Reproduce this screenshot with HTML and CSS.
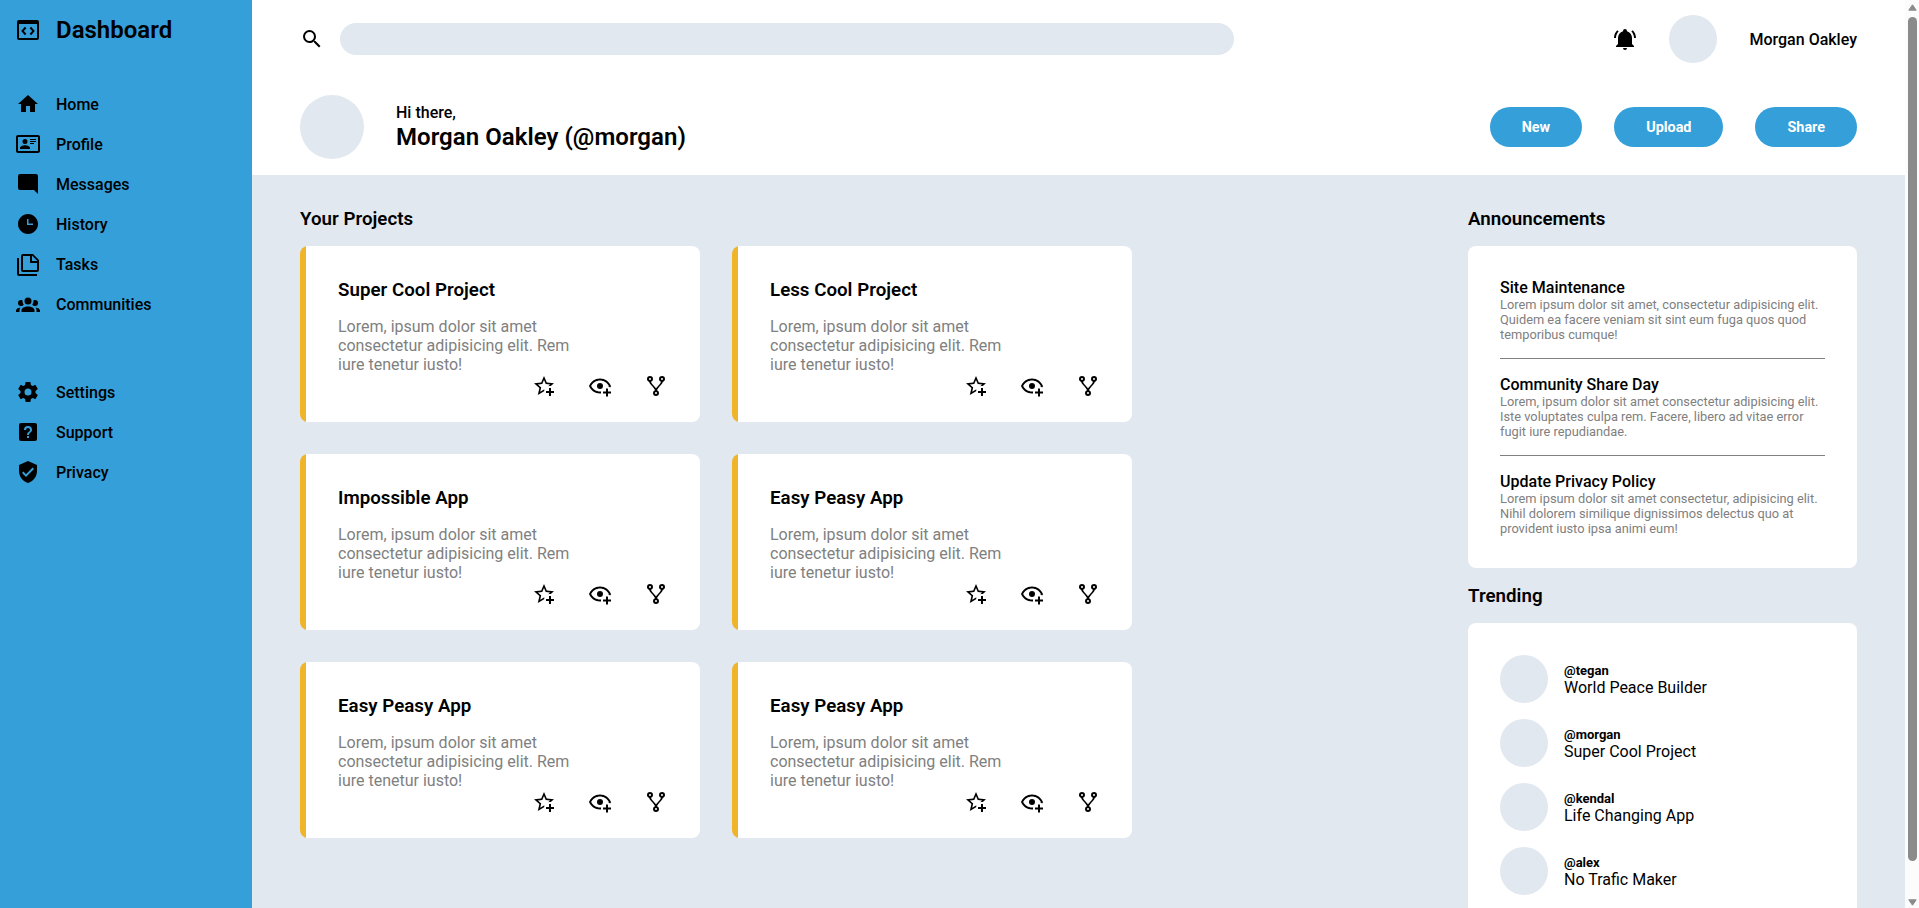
FILE: index.html
```html
<!DOCTYPE html>
<html lang="en">
<head>
<meta charset="utf-8">
<title>Dashboard</title>
<link rel="stylesheet" href="styles.css">
</head>
<body>
<svg class="sprite" aria-hidden="true">
  <symbol id="star" viewBox="0 0 24 24"><path d="M5.8 21L7.4 14L2 9.2L9.2 8.6L12 2L14.8 8.6L22 9.2L18.8 12H18C17.3 12 16.6 12.1 15.9 12.4L18.1 10.5L13.7 10.1L12 6.1L10.3 10.1L5.9 10.5L9.2 13.4L8.2 17.7L12 15.4L12.5 15.7C12.3 16.2 12.1 16.8 12.1 17.3L5.8 21M17 14V17H14V19H17V22H19V19H22V17H19V14H17Z"/></symbol>
  <symbol id="eye" viewBox="0 0 24 24"><path d="M12,4.5C7,4.5 2.73,7.61 1,12C2.73,16.39 7,19.5 12,19.5C12.36,19.5 12.72,19.5 13.08,19.45C13.03,19.13 13,18.82 13,18.5C13,18.14 13.04,17.78 13.1,17.42C12.74,17.46 12.37,17.5 12,17.5C8.24,17.5 4.83,15.36 3.18,12C4.83,8.64 8.24,6.5 12,6.5C15.76,6.5 19.17,8.64 20.82,12C20.7,12.24 20.56,12.45 20.43,12.68C21.09,12.84 21.72,13.11 22.29,13.5C22.56,13 22.8,12.5 23,12C21.27,7.61 17,4.5 12,4.5M12,9A3,3 0 0,0 9,12A3,3 0 0,0 12,15A3,3 0 0,0 15,12A3,3 0 0,0 12,9M18,14.5V17.5H15V19.5H18V22.5H20V19.5H23V17.5H20V14.5H18Z"/></symbol>
  <symbol id="fork" viewBox="0 0 24 24"><path d="M6,2A3,3 0 0,1 9,5C9,6.28 8.19,7.38 7.06,7.81C7.15,8.27 7.39,8.83 8,9.63C9,10.92 11,12.83 12,14.17C13,12.83 15,10.92 16,9.63C16.61,8.83 16.85,8.27 16.94,7.81C15.81,7.38 15,6.28 15,5A3,3 0 0,1 18,2A3,3 0 0,1 21,5C21,6.32 20.14,7.45 18.95,7.85C18.87,8.37 18.64,9 18,9.83C17,11.17 15,13.08 14,14.38C13.39,15.17 13.15,15.73 13.06,16.19C14.19,16.62 15,17.72 15,19A3,3 0 0,1 12,22A3,3 0 0,1 9,19C9,17.72 9.81,16.62 10.94,16.19C10.85,15.73 10.61,15.17 10,14.38C9,13.08 7,11.17 6,9.83C5.36,9 5.13,8.37 5.05,7.85C3.86,7.45 3,6.32 3,5A3,3 0 0,1 6,2M6,4A1,1 0 0,0 5,5A1,1 0 0,0 6,6A1,1 0 0,0 7,5A1,1 0 0,0 6,4M18,4A1,1 0 0,0 17,5A1,1 0 0,0 18,6A1,1 0 0,0 19,5A1,1 0 0,0 18,4M12,18A1,1 0 0,0 11,19A1,1 0 0,0 12,20A1,1 0 0,0 13,19A1,1 0 0,0 12,18Z"/></symbol>
</svg>
<div class="page">
  <aside class="sidebar">
    <div class="brand">
      <svg class="icon" viewBox="0 0 24 24"><path d="M21,2H3A2,2 0 0,0 1,4V20A2,2 0 0,0 3,22H21A2,2 0 0,0 23,20V4A2,2 0 0,0 21,2M21,20H3V6H21V20M8.9,8.8L10.4,10.2L7.8,13L10.4,15.8L8.9,17.2L5.2,13L8.9,8.8M15.1,17.2L13.6,15.8L16.2,13L13.6,10.2L15.1,8.8L18.8,13L15.1,17.2Z"/></svg>
      <h1>Dashboard</h1>
    </div>
    <nav class="nav">
      <a><svg class="icon" viewBox="0 0 24 24"><path d="M10,20V14H14V20H19V12H22L12,3L2,12H5V20H10Z"/></svg>Home</a>
      <a><svg class="icon" viewBox="0 0 24 24"><path d="M22,3H2C0.91,3.04 0.04,3.91 0,5V19C0.04,20.09 0.91,20.96 2,21H22C23.09,20.96 23.96,20.09 24,19V5C23.96,3.91 23.09,3.04 22,3M22,19H2V5H22V19M14,17V15.75C14,14.09 10.66,13.25 9,13.25C7.34,13.25 4,14.09 4,15.75V17H14M9,7A2.5,2.5 0 0,0 6.5,9.5A2.5,2.5 0 0,0 9,12A2.5,2.5 0 0,0 11.5,9.5A2.5,2.5 0 0,0 9,7M14,7V8H20V7H14M14,9V10H20V9H14M14,11V12H18V11H14"/></svg>Profile</a>
      <a><svg class="icon" viewBox="0 0 24 24"><path d="M22,4C22,2.89 21.1,2 20,2H4A2,2 0 0,0 2,4V16A2,2 0 0,0 4,18H18L22,22V4Z"/></svg>Messages</a>
      <a><svg class="icon" viewBox="0 0 24 24"><path d="M12 2C6.5 2 2 6.5 2 12S6.5 22 12 22 22 17.5 22 12 17.5 2 12 2M17 13H11V7H12.5V11.5H17V13Z"/></svg>History</a>
      <a><svg class="icon" viewBox="0 0 24 24"><path d="M3,6V22H21V24H3A2,2 0 0,1 1,22V6H3M16,9H21.5L16,3.5V9M7,2H17L23,8V18A2,2 0 0,1 21,20H7C5.89,20 5,19.1 5,18V4A2,2 0 0,1 7,2M7,4V18H21V11H14V4H7Z"/></svg>Tasks</a>
      <a><svg class="icon" viewBox="0 0 24 24"><path d="M12,5.5A3.5,3.5 0 0,1 15.5,9A3.5,3.5 0 0,1 12,12.5A3.5,3.5 0 0,1 8.5,9A3.5,3.5 0 0,1 12,5.5M5,8C5.56,8 6.08,8.15 6.53,8.42C6.38,9.85 6.8,11.27 7.66,12.38C7.16,13.34 6.16,14 5,14A3,3 0 0,1 2,11A3,3 0 0,1 5,8M19,8A3,3 0 0,1 22,11A3,3 0 0,1 19,14C17.84,14 16.84,13.34 16.34,12.38C17.2,11.27 17.62,9.85 17.47,8.42C17.92,8.15 18.44,8 19,8M5.5,18.25C5.5,16.18 8.41,14.5 12,14.5C15.59,14.5 18.5,16.18 18.5,18.25V20H5.5V18.25M0,20V18.5C0,17.11 1.89,15.94 4.45,15.6C3.86,16.28 3.5,17.22 3.5,18.25V20H0M24,20H20.5V18.25C20.5,17.22 20.14,16.28 19.55,15.6C22.11,15.94 24,17.11 24,18.5V20Z"/></svg>Communities</a>
    </nav>
    <nav class="nav">
      <a><svg class="icon" viewBox="0 0 24 24"><path d="M12,15.5A3.5,3.5 0 0,1 8.5,12A3.5,3.5 0 0,1 12,8.5A3.5,3.5 0 0,1 15.5,12A3.5,3.5 0 0,1 12,15.5M19.43,12.97C19.47,12.65 19.5,12.33 19.5,12C19.5,11.67 19.47,11.34 19.43,11L21.54,9.37C21.73,9.22 21.78,8.95 21.66,8.73L19.66,5.27C19.54,5.05 19.27,4.96 19.05,5.05L16.56,6.05C16.04,5.66 15.5,5.32 14.87,5.07L14.5,2.42C14.46,2.18 14.25,2 14,2H10C9.75,2 9.54,2.18 9.5,2.42L9.13,5.07C8.5,5.32 7.96,5.66 7.44,6.05L4.95,5.05C4.73,4.96 4.46,5.05 4.34,5.27L2.34,8.73C2.21,8.95 2.27,9.22 2.46,9.37L4.57,11C4.53,11.34 4.5,11.67 4.5,12C4.5,12.33 4.53,12.65 4.57,12.97L2.46,14.63C2.27,14.78 2.21,15.05 2.34,15.27L4.34,18.73C4.46,18.95 4.73,19.03 4.95,18.95L7.44,17.94C7.96,18.34 8.5,18.68 9.13,18.93L9.5,21.58C9.54,21.82 9.75,22 10,22H14C14.25,22 14.46,21.82 14.5,21.58L14.87,18.93C15.5,18.67 16.04,18.34 16.56,17.94L19.05,18.95C19.27,19.03 19.54,18.95 19.66,18.73L21.66,15.27C21.78,15.05 21.73,14.78 21.54,14.63L19.43,12.97Z"/></svg>Settings</a>
      <a><svg class="icon" viewBox="0 0 24 24"><path fill-rule="evenodd" d="M11,18H13V16H11V18M12,6A4,4 0 0,0 8,10H10A2,2 0 0,1 12,8A2,2 0 0,1 14,10C14,12 11,11.75 11,15H13C13,12.75 16,12.5 16,10A4,4 0 0,0 12,6M5,3H19A2,2 0 0,1 21,5V19A2,2 0 0,1 19,21H5A2,2 0 0,1 3,19V5A2,2 0 0,1 5,3Z"/></svg>Support</a>
      <a><svg class="icon" viewBox="0 0 24 24"><path d="M10,17L6,13L7.41,11.59L10,14.17L16.59,7.58L18,9M12,1L3,5V11C3,16.55 6.84,21.74 12,23C17.16,21.74 21,16.55 21,11V5L12,1Z"/></svg>Privacy</a>
    </nav>
  </aside>

  <div class="content">
    <header class="header">
      <div class="topbar">
        <svg class="icon search-icon" viewBox="0 0 24 24"><path d="M9.5,3A6.5,6.5 0 0,1 16,9.5C16,11.11 15.41,12.59 14.44,13.73L14.71,14H15.5L20.5,19L19,20.5L14,15.5V14.71L13.73,14.44C12.59,15.41 11.11,16 9.5,16A6.5,6.5 0 0,1 3,9.5A6.5,6.5 0 0,1 9.5,3M9.5,5C7,5 5,7 5,9.5C5,12 7,14 9.5,14C12,14 14,12 14,9.5C14,7 12,5 9.5,5Z"/></svg>
        <div class="search"></div>
        <div class="user">
          <svg class="icon" viewBox="0 0 24 24"><path d="M21,19V20H3V19L5,17V11C5,7.9 7.03,5.17 10,4.29C10,4.19 10,4.1 10,4A2,2 0 0,1 12,2A2,2 0 0,1 14,4C14,4.1 14,4.19 14,4.29C16.97,5.17 19,7.9 19,11V17L21,19M14,21A2,2 0 0,1 12,23A2,2 0 0,1 10,21M19.75,3.19L18.33,4.61C20.04,6.3 21,8.6 21,11H23C23,8.07 21.84,5.25 19.75,3.19M1,11H3C3,8.6 3.96,6.3 5.67,4.61L4.25,3.19C2.16,5.25 1,8.07 1,11Z"/></svg>
          <div class="avatar"></div>
          <span class="user-name">Morgan Oakley</span>
        </div>
      </div>
      <div class="welcome">
        <div class="avatar avatar-large"></div>
        <div class="greeting">
          <p>Hi there,</p>
          <h2>Morgan Oakley (@morgan)</h2>
        </div>
        <div class="actions">
          <button>New</button>
          <button>Upload</button>
          <button>Share</button>
        </div>
      </div>
    </header>

    <main class="main">
      <section class="projects">
        <h3>Your Projects</h3>
        <div class="cards">
          <article class="card">
            <h3>Super Cool Project</h3>
            <p>Lorem, ipsum dolor sit amet consectetur adipisicing elit. Rem iure tenetur iusto!</p>
            <div class="card-icons"><svg class="icon"><use href="#star"/></svg><svg class="icon"><use href="#eye"/></svg><svg class="icon"><use href="#fork"/></svg></div>
          </article>
          <article class="card">
            <h3>Less Cool Project</h3>
            <p>Lorem, ipsum dolor sit amet consectetur adipisicing elit. Rem iure tenetur iusto!</p>
            <div class="card-icons"><svg class="icon"><use href="#star"/></svg><svg class="icon"><use href="#eye"/></svg><svg class="icon"><use href="#fork"/></svg></div>
          </article>
          <article class="card">
            <h3>Impossible App</h3>
            <p>Lorem, ipsum dolor sit amet consectetur adipisicing elit. Rem iure tenetur iusto!</p>
            <div class="card-icons"><svg class="icon"><use href="#star"/></svg><svg class="icon"><use href="#eye"/></svg><svg class="icon"><use href="#fork"/></svg></div>
          </article>
          <article class="card">
            <h3>Easy Peasy App</h3>
            <p>Lorem, ipsum dolor sit amet consectetur adipisicing elit. Rem iure tenetur iusto!</p>
            <div class="card-icons"><svg class="icon"><use href="#star"/></svg><svg class="icon"><use href="#eye"/></svg><svg class="icon"><use href="#fork"/></svg></div>
          </article>
          <article class="card">
            <h3>Easy Peasy App</h3>
            <p>Lorem, ipsum dolor sit amet consectetur adipisicing elit. Rem iure tenetur iusto!</p>
            <div class="card-icons"><svg class="icon"><use href="#star"/></svg><svg class="icon"><use href="#eye"/></svg><svg class="icon"><use href="#fork"/></svg></div>
          </article>
          <article class="card">
            <h3>Easy Peasy App</h3>
            <p>Lorem, ipsum dolor sit amet consectetur adipisicing elit. Rem iure tenetur iusto!</p>
            <div class="card-icons"><svg class="icon"><use href="#star"/></svg><svg class="icon"><use href="#eye"/></svg><svg class="icon"><use href="#fork"/></svg></div>
          </article>
        </div>
      </section>

      <aside class="side">
        <h3>Announcements</h3>
        <div class="panel news">
          <div class="news-item">
            <h4>Site Maintenance</h4>
            <p>Lorem ipsum dolor sit amet, consectetur adipisicing elit. Quidem ea facere veniam sit sint eum fuga quos quod temporibus cumque!</p>
          </div>
          <div class="news-item">
            <h4>Community Share Day</h4>
            <p>Lorem, ipsum dolor sit amet consectetur adipisicing elit. Iste voluptates culpa rem. Facere, libero ad vitae error fugit iure repudiandae.</p>
          </div>
          <div class="news-item">
            <h4>Update Privacy Policy</h4>
            <p>Lorem ipsum dolor sit amet consectetur, adipisicing elit. Nihil dolorem similique dignissimos delectus quo at provident iusto ipsa animi eum!</p>
          </div>
        </div>
        <h3>Trending</h3>
        <div class="panel trending">
          <div class="trend"><div class="avatar"></div><div class="trend-text"><h5>@tegan</h5><p>World Peace Builder</p></div></div>
          <div class="trend"><div class="avatar"></div><div class="trend-text"><h5>@morgan</h5><p>Super Cool Project</p></div></div>
          <div class="trend"><div class="avatar"></div><div class="trend-text"><h5>@kendal</h5><p>Life Changing App</p></div></div>
          <div class="trend"><div class="avatar"></div><div class="trend-text"><h5>@alex</h5><p>No Trafic Maker</p></div></div>
        </div>
      </aside>
    </main>
  </div>

  <div class="scrollbar">
    <svg class="arrow" viewBox="0 0 9 7"><path d="M4.5 0.8L8.2 6.2H0.8Z"/></svg>
    <div class="thumb"></div>
    <svg class="arrow" viewBox="0 0 9 7"><path d="M4.5 6.2L0.8 0.8H8.2Z"/></svg>
  </div>
</div>
</body>
</html>
```

FILE: styles.css
```css
* {
  box-sizing: border-box;
  margin: 0;
  padding: 0;
}

body {
  height: 100vh;
  overflow: hidden;
  font-family: Roboto, "Liberation Sans", sans-serif;
  font-size: 16px;
  line-height: 19px;
  color: #000;
}

.sprite {
  display: none;
}

.page {
  display: flex;
  height: 100vh;
  overflow: hidden;
}

.icon {
  flex: none;
  width: 24px;
  height: 24px;
  fill: currentColor;
}

.sidebar {
  flex: none;
  width: 252px;
  padding: 16px;
  background: #359fda;
}

.brand {
  display: flex;
  align-items: center;
  gap: 16px;
  height: 28px;
  margin-bottom: 40px;
}

.brand h1 {
  font-size: 24px;
  line-height: 28px;
  font-weight: 600;
}

.nav {
  display: flex;
  flex-direction: column;
  margin-bottom: 48px;
}

.nav a {
  display: flex;
  align-items: center;
  gap: 16px;
  height: 40px;
  font-weight: 500;
}

.content {
  flex: 1;
  display: flex;
  flex-direction: column;
  min-width: 0;
  background: #e1e8f0;
}

.header {
  flex: none;
  height: 175px;
  padding: 15px 48px 16px;
  background: #fff;
}

.topbar {
  display: flex;
  align-items: center;
  height: 48px;
}

.search {
  width: 894px;
  height: 32px;
  margin-left: 16px;
  border-radius: 16px;
  background: #e1e8f0;
}

.user {
  display: flex;
  align-items: center;
  gap: 32px;
  margin-left: auto;
}

.user-name {
  font-weight: 500;
}

.avatar {
  flex: none;
  width: 48px;
  height: 48px;
  border-radius: 50%;
  background: #e1e8f0;
}

.avatar-large {
  width: 64px;
  height: 64px;
}

.welcome {
  display: flex;
  align-items: center;
  gap: 32px;
  margin-top: 32px;
}

.greeting p {
  font-weight: 500;
}

.greeting h2 {
  padding-top: 1px;
  font-size: 24px;
  line-height: 28px;
  font-weight: 600;
  letter-spacing: 0.04px;
}

.actions {
  display: flex;
  gap: 32px;
  margin-left: auto;
}

.actions button {
  height: 40px;
  padding: 0 32px;
  border: 0;
  border-radius: 20px;
  background: #359fda;
  color: #fff;
  font: bold 14.4px Roboto, "Liberation Sans", sans-serif;
}

.main {
  display: flex;
  justify-content: space-between;
  padding: 32px 48px 0;
}

h3 {
  padding-top: 1px;
  font-size: 18.72px;
  line-height: 23px;
  font-weight: 600;
  letter-spacing: 0.02px;
  margin-bottom: 15px;
}

.cards {
  display: grid;
  grid-template-columns: 400px 400px;
  gap: 32px;
}

.card {
  height: 176px;
  padding: 32px 32px 24px 38px;
  border-radius: 8px;
  background: linear-gradient(to right, #f0b429 6px, #fff 6px);
}

.card p {
  width: 240px;
  color: gray;
}

.card-icons {
  display: flex;
  justify-content: flex-end;
  gap: 32px;
}

.side {
  width: 389px;
}

.panel {
  padding: 32px;
  border-radius: 8px;
  background: #fff;
}

.news {
  margin-bottom: 16px;
}

.news-item + .news-item {
  margin-top: 16px;
  padding-top: 16px;
  border-top: 1px solid gray;
}

.news-item h4 {
  font-size: 16px;
  font-weight: 500;
  letter-spacing: 0.02px;
}

.news-item p {
  font-size: 12.8px;
  line-height: 15px;
  color: gray;
}

.trending {
  display: flex;
  flex-direction: column;
  gap: 16px;
}

.trend {
  display: flex;
  align-items: center;
  gap: 16px;
}

.trend-text {
  padding-top: 2px;
}

.trend h5 {
  font-size: 13px;
  line-height: 15px;
  font-weight: 700;
}

.scrollbar {
  flex: none;
  display: flex;
  flex-direction: column;
  align-items: center;
  width: 14px;
  padding: 4px 1px 2px 2px;
  background: #fcfcfc;
}

.arrow {
  width: 9px;
  height: 7px;
  fill: #8b8b8b;
  stroke: #8b8b8b;
  stroke-linejoin: round;
}

.thumb {
  width: 9px;
  height: 844px;
  margin: 6px 0 auto;
  border-radius: 5px;
  background: #8b8b8b;
}
```
